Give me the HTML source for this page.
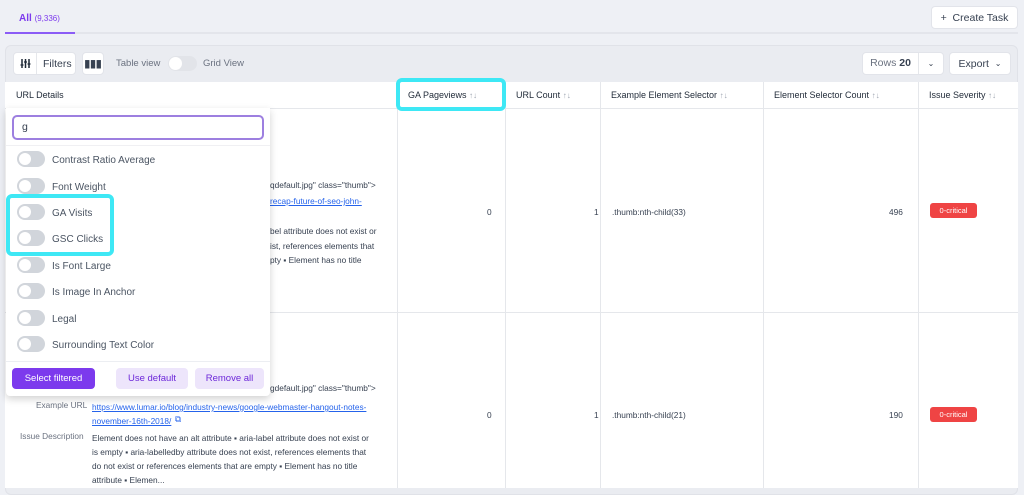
<!DOCTYPE html>
<html><head><style>
*{box-sizing:border-box;margin:0;padding:0}
body{width:1024px;height:488px;overflow:hidden;background:#eef0f5;font-family:"Liberation Sans",sans-serif;color:#374151;position:relative;font-size:10px}
.a{position:absolute}
.btn{position:absolute;background:#fff;border:1px solid #e2e4ea;border-radius:4px;font-size:10.5px;display:flex;align-items:center;justify-content:center;color:#374151}
.th{position:absolute;top:82px;height:26px;line-height:26px;font-size:9px;color:#1f2937;padding-left:10px;border-left:1px solid #e5e7eb}
.th i{font-style:normal;color:#9ca3af;font-size:8px}
.vl{position:absolute;width:1px;background:#e5e7eb;top:108px;height:380px}
.t{position:absolute;font-size:8.3px;color:#374151;white-space:nowrap}
.lk{color:#2563eb;text-decoration:underline}
.tg{position:absolute;left:17px;width:28px;height:16px;border-radius:8px;background:#d1d5db}
.tg:after{content:"";position:absolute;left:2px;top:2px;width:12px;height:12px;border-radius:50%;background:#fff}
.it{position:absolute;left:52px;font-size:10px;color:#4b5563}
.badge{position:absolute;left:930px;width:47px;height:15px;background:#ef4444;border-radius:3px;color:#fff;font-size:7.5px;text-align:center;line-height:15px}
</style></head><body>
<div class="a" style="left:19px;top:13px;font-size:10px;color:#7c3aed;font-weight:bold">All <span style="font-size:8px;font-weight:normal">(9,336)</span></div>
<div class="a" style="left:5px;top:32px;width:1013px;height:2px;background:#e3e5eb"></div>
<div class="a" style="left:5px;top:32px;width:70px;height:2px;background:#8b5cf6"></div>
<div class="btn" style="left:931px;top:6px;width:87px;height:23px">+&nbsp; Create Task</div>
<div class="a" style="left:5px;top:45px;width:1013px;height:450px;background:#eaecf1;border-radius:6px;border:1px solid #e0e2e8"></div>
<div class="btn" style="left:13px;top:52px;width:63px;height:23px;justify-content:flex-start"><span style="width:23px;height:21px;border-right:1px solid #e5e7eb;display:flex;align-items:center;justify-content:center"><svg width="11" height="11" viewBox="0 0 11 11" stroke="#1f2937" stroke-width="1.5"><path d="M2 1v9M5.5 1v9M9 1v9"/><path d="M0.5 7h3M4 4h3M7.5 6h3" stroke-width="1.3"/></svg></span><span style="padding-left:6px">Filters</span></div>
<div class="btn" style="left:82px;top:52px;width:22px;height:23px;font-weight:bold">▮▮▮</div>
<div class="a" style="left:116px;top:58px;font-size:9.5px;color:#6b7280">Table view</div>
<div class="a" style="left:168px;top:56px;width:29px;height:15px;border-radius:8px;background:#e2e4e9"><div style="position:absolute;left:1px;top:1px;width:13px;height:13px;border-radius:50%;background:#fff"></div></div>
<div class="a" style="left:203px;top:58px;font-size:9.5px;color:#6b7280">Grid View</div>
<div class="btn" style="left:862px;top:52px;width:82px;height:23px;justify-content:flex-start"><span style="width:56px;text-align:center;border-right:1px solid #e5e7eb;line-height:21px"><span style="color:#6b7280">Rows</span> <b>20</b></span><span style="width:24px;text-align:center;font-size:8px">⌄</span></div>
<div class="btn" style="left:949px;top:52px;width:62px;height:23px">Export &nbsp;<span style="font-size:8px">⌄</span></div>
<div class="a" style="left:5px;top:82px;width:1013px;height:406px;background:#fff"></div>
<div class="a" style="left:5px;top:108px;width:1013px;height:1px;background:#e5e7eb"></div>
<div class="a" style="left:5px;top:312px;width:1013px;height:1px;background:#e5e7eb"></div>
<div class="th" style="left:6px;border:0;width:391px">URL Details</div>
<div class="th" style="left:397px;width:108px">GA Pageviews <i>↑↓</i></div>
<div class="th" style="left:505px;width:95px">URL Count <i>↑↓</i></div>
<div class="th" style="left:600px;width:163px">Example Element Selector <i>↑↓</i></div>
<div class="th" style="left:763px;width:155px">Element Selector Count <i>↑↓</i></div>
<div class="th" style="left:918px;width:100px">Issue Severity <i>↑↓</i></div>
<div class="vl" style="left:397px"></div><div class="vl" style="left:505px"></div><div class="vl" style="left:600px"></div><div class="vl" style="left:763px"></div><div class="vl" style="left:918px"></div>
<div class="a" style="left:1018px;top:82px;width:6px;height:406px;background:#eef0f5"></div>
<div class="t" style="left:270px;top:180px">qdefault.jpg" class="thumb"&gt;</div>
<div class="t lk" style="left:270px;top:196px">recap-future-of-seo-john-</div>
<div class="t" style="left:270px;top:224px;line-height:14.5px">bel attribute does not exist or<br>ist, references elements that<br>pty ▪ Element has no title</div>
<div class="t" style="left:487px;top:207px">0</div><div class="t" style="left:594px;top:207px">1</div>
<div class="t" style="left:612px;top:207px">.thumb:nth-child(33)</div><div class="t" style="left:889px;top:207px">496</div>
<div class="badge" style="top:203px">0-critical</div>
<div class="t" style="left:270px;top:383px">gdefault.jpg" class="thumb"&gt;</div>
<div class="t" style="left:36px;top:400px;color:#6b7280">Example URL</div>
<div class="t lk" style="left:92px;top:400px;line-height:14px">https://www.lumar.io/blog/industry-news/google-webmaster-hangout-notes-<br>november-16th-2018/</div><div class="t" style="left:175px;top:414px;color:#2563eb">⧉</div>
<div class="t" style="left:20px;top:431px;color:#6b7280">Issue Description</div>
<div class="t" style="left:92px;top:431px;line-height:14px">Element does not have an alt attribute ▪ aria-label attribute does not exist or<br>is empty ▪ aria-labelledby attribute does not exist, references elements that<br>do not exist or references elements that are empty ▪ Element has no title<br>attribute ▪ Elemen...</div>
<div class="t" style="left:487px;top:410px">0</div><div class="t" style="left:594px;top:410px">1</div>
<div class="t" style="left:612px;top:410px">.thumb:nth-child(21)</div><div class="t" style="left:889px;top:410px">190</div>
<div class="badge" style="top:407px">0-critical</div>
<div class="a" style="left:6px;top:108px;width:264px;height:288px;background:#fff;box-shadow:0 3px 8px rgba(0,0,0,.18);border-radius:0 0 4px 4px"></div>
<div class="a" style="left:12px;top:115px;width:252px;height:25px;border:2px solid #9d7fe0;border-radius:5px;font-size:10.5px;padding:4px 8px;color:#374151">g</div>
<div class="a" style="left:6px;top:145px;width:264px;height:1px;background:#f0f0f3"></div>
<div class="tg" style="top:151px"></div><div class="it" style="top:155px">Contrast Ratio Average</div>
<div class="tg" style="top:178px"></div><div class="it" style="top:182px">Font Weight</div>
<div class="tg" style="top:204px"></div><div class="it" style="top:208px">GA Visits</div>
<div class="tg" style="top:230px"></div><div class="it" style="top:234px">GSC Clicks</div>
<div class="tg" style="top:257px"></div><div class="it" style="top:261px">Is Font Large</div>
<div class="tg" style="top:283px"></div><div class="it" style="top:287px">Is Image In Anchor</div>
<div class="tg" style="top:310px"></div><div class="it" style="top:314px">Legal</div>
<div class="tg" style="top:336px"></div><div class="it" style="top:340px">Surrounding Text Color</div>
<div class="a" style="left:6px;top:361px;width:264px;height:1px;background:#eceef2"></div>
<div class="a" style="left:12px;top:368px;width:83px;height:21px;background:#7c3aed;border-radius:4px;color:#fff;font-size:9.5px;text-align:center;line-height:21px">Select filtered</div>
<div class="a" style="left:116px;top:368px;width:72px;height:21px;background:#ede5fb;border-radius:4px;color:#6d28d9;font-size:9.5px;text-align:center;line-height:21px">Use default</div>
<div class="a" style="left:195px;top:368px;width:69px;height:21px;background:#ede5fb;border-radius:4px;color:#6d28d9;font-size:9.5px;text-align:center;line-height:21px">Remove all</div>
<div class="a" style="left:6px;top:194px;width:108px;height:62px;border:4px solid #3ee8f5;border-radius:6px"></div>
<div class="a" style="left:396px;top:78px;width:110px;height:33px;border:4px solid #3ee8f5;border-radius:6px"></div>
</body></html>
